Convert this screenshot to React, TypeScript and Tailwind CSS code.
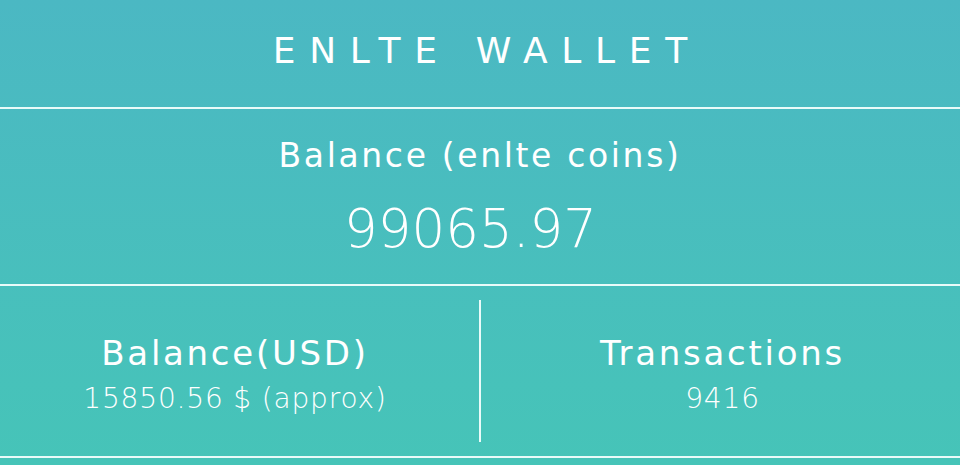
// Wallet summary card

const font = { fontFamily: '"DejaVu Sans", Inter, sans-serif' };

function Divider() {
  return <div className="h-[2px] w-full bg-[#e9fbf9]" />;
}

function Stat({ label, value, className }: { label: string; value: string; className?: string }) {
  return (
    <div className={`flex flex-col items-center justify-center text-white pt-[6px] ${className ?? ''}`}>
      <p className="text-[34px] leading-[44px] tracking-[0.08em]">{label}</p>
      <p className="text-[28px] leading-[38px] font-extralight tracking-[0.03em] mt-[5px]">{value}</p>
    </div>
  );
}

export default function App() {
  return (
    <div
      className="w-[960px] h-[465px] overflow-hidden bg-gradient-to-b from-[#4bb8c3] to-[#46c4b8] text-white"
      style={font}
    >
      {/* Title */}
      <div className="h-[107px] flex items-center justify-center pb-[6px]">
        <h1 className="text-[36px] font-normal tracking-[0.38em] pl-[0.38em]">ENLTE WALLET</h1>
      </div>
      <Divider />

      {/* Coin balance */}
      <div className="h-[175px] flex flex-col items-center pt-[22px]">
        <p className="text-[33px] leading-[50px] tracking-[0.08em]">Balance (enlte coins)</p>
        <p className="text-[53px] leading-[72px] font-extralight mt-[12px] pr-[19px]">99065.97</p>
      </div>
      <Divider />

      {/* Stats */}
      <div className="h-[170px] grid grid-cols-[1fr_2px_1fr] py-[14px]">
        <Stat label="Balance(USD)" value="15850.56 $ (approx)" className="pr-[9px]" />
        <div className="bg-[#e9fbf9]" />
        <Stat label="Transactions" value="9416" className="pl-[4px]" />
      </div>
      <Divider />
    </div>
  );
}
